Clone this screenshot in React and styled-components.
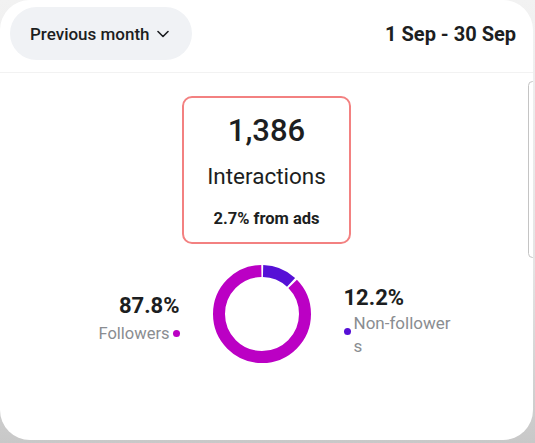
import React from "react";
import styled, { createGlobalStyle } from "styled-components";

const Global = createGlobalStyle`
  html, body { margin: 0; padding: 0; }
  body {
    width: 535px; height: 443px; overflow: hidden;
    background: linear-gradient(180deg, #f2f2f2 0%, #e4e4e4 60%, #c8c8c8 100%);
    font-family: Roboto, "Liberation Sans", sans-serif;
  }
`;

const Card = styled.div`
  position: relative;
  width: 533px;
  height: 440px;
  background: #fff;
  border-radius: 30px;
  overflow: hidden;
  display: flex;
  flex-direction: column;
`;

const Header = styled.div`
  height: 73px;
  box-sizing: border-box;
  display: flex;
  align-items: flex-start;
  justify-content: space-between;
  padding: 7px 17px 0 10px;
  border-bottom: 1px solid #f2f2f2;
`;

const Pill = styled.div`
  height: 53px;
  width: 182px;
  box-sizing: border-box;
  border-radius: 27px;
  background: #f0f2f5;
  display: flex;
  align-items: center;
  padding-left: 20px;
  gap: 7px;
  font-size: 17px;
  font-weight: 500;
  color: #1c1e21;
`;

const DateText = styled.div`
  margin-top: 15px;
  font-size: 20px;
  font-weight: 700;
  color: #1c1e21;
`;

const Body = styled.div`
  display: flex;
  flex-direction: column;
  align-items: center;
  padding-top: 23px;
`;

const StatBox = styled.div`
  width: 169px;
  height: 148px;
  box-sizing: border-box;
  border: 2px solid #f38181;
  border-radius: 10px;
  display: flex;
  flex-direction: column;
  align-items: center;
  color: #1c1e21;
`;

const BigNum = styled.div`
  margin-top: 15px;
  font-size: 31px;
  font-weight: 500;
  line-height: 36px;
`;

const Label = styled.div`
  margin-top: 14px;
  font-size: 22.5px;
  line-height: 26px;
`;

const Ads = styled.div`
  margin-top: 20px;
  font-size: 16.5px;
  font-weight: 700;
  line-height: 20px;
`;

const ChartRow = styled.div`
  display: grid;
  grid-template-columns: 100px 100px 120px;
  column-gap: 32px;
  margin-top: 20px;
  margin-left: 10px;
  align-items: start;
`;

const Legend = styled.div`
  display: flex;
  flex-direction: column;
  align-items: ${(p) => (p.$right ? "flex-start" : "flex-end")};
  margin-top: ${(p) => (p.$right ? "21px" : "29px")};
`;

const Pct = styled.div`
  font-size: 22px;
  font-weight: 700;
  color: #1c1e21;
  line-height: 26px;
`;

const LegendLine = styled.div`
  display: flex;
  align-items: ${(p) => (p.$right ? "flex-start" : "center")};
  gap: 3px;
  margin-top: ${(p) => (p.$right ? "1px" : "3px")};
  font-size: ${(p) => (p.$right ? "17px" : "16.5px")};
  line-height: 23px;
  color: #8a8d91;
`;

const Dot = styled.span`
  width: 7px;
  height: 7px;
  border-radius: 50%;
  background: ${(p) => p.$color};
  flex: none;
  margin-top: ${(p) => (p.$right ? "16px" : "0")};
`;

const Wrap = styled.span`
  width: 98px;
  word-break: break-all;
`;

const Scroll = styled.div`
  position: absolute;
  right: -4px;
  top: 81px;
  width: 9px;
  height: 177px;
  box-sizing: border-box;
  border: 1.5px solid #c4c4c4;
  border-radius: 6px;
`;

function Donut() {
  const r = 43;
  const c = 2 * Math.PI * r;
  const blue = 0.122;
  const gap = 2.2;
  return (
    <svg width="100" height="100" viewBox="0 0 100 100">
      <g transform="rotate(-90 50 50)">
        <circle
          cx="50" cy="50" r={r} fill="none" stroke="#bb00c4" strokeWidth="12"
          strokeDasharray={`${c * (1 - blue) - gap} ${c}`}
          strokeDashoffset={-(c * blue + gap / 2)}
        />
        <circle
          cx="50" cy="50" r={r} fill="none" stroke="#5610d6" strokeWidth="12"
          strokeDasharray={`${c * blue - gap} ${c}`}
          strokeDashoffset={-gap / 2}
        />
      </g>
    </svg>
  );
}

export default function App() {
  return (
    <>
      <Global />
      <Card>
        <Header>
          <Pill>
            Previous month
            <svg width="12" height="8" viewBox="0 0 12 8">
              <path d="M1 1.5 L6 6.5 L11 1.5" fill="none" stroke="#1c1e21" strokeWidth="1.6" strokeLinecap="round" strokeLinejoin="round" />
            </svg>
          </Pill>
          <DateText>1 Sep - 30 Sep</DateText>
        </Header>
        <Body>
          <StatBox>
            <BigNum>1,386</BigNum>
            <Label>Interactions</Label>
            <Ads>2.7% from ads</Ads>
          </StatBox>
          <ChartRow>
            <Legend>
              <Pct>87.8%</Pct>
              <LegendLine>
                Followers
                <Dot $color="#bb00c4" />
              </LegendLine>
            </Legend>
            <Donut />
            <Legend $right>
              <Pct>12.2%</Pct>
              <LegendLine $right>
                <Dot $right $color="#5610d6" />
                <Wrap>Non-followers</Wrap>
              </LegendLine>
            </Legend>
          </ChartRow>
        </Body>
        <Scroll />
      </Card>
    </>
  );
}
